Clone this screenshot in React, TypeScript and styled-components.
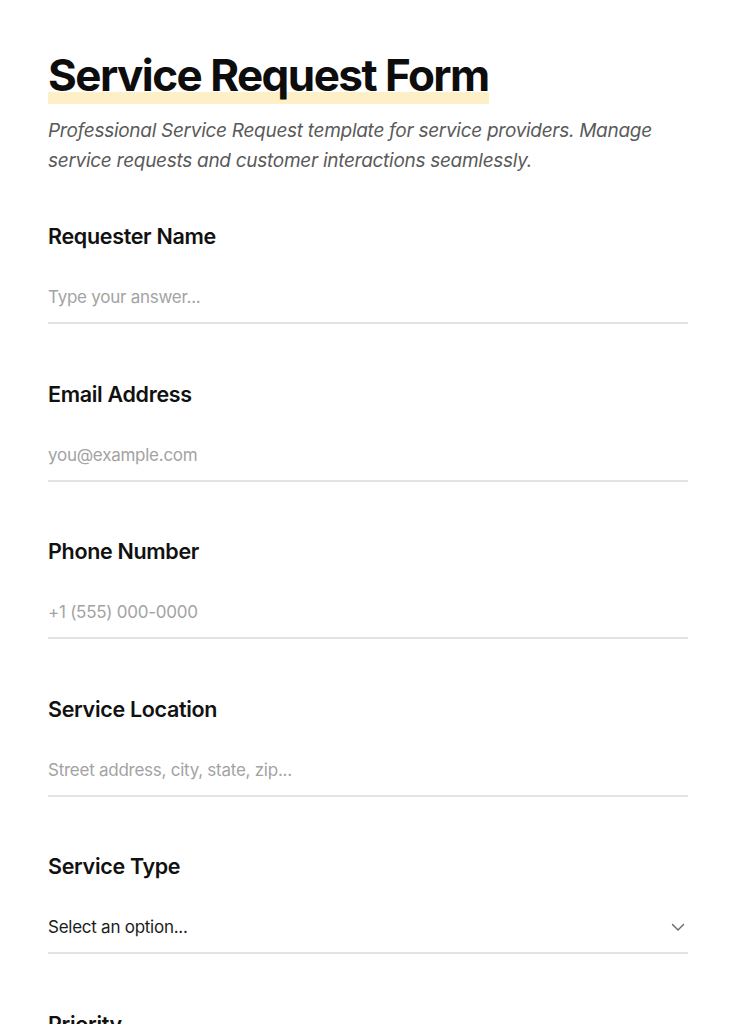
import { FC } from 'react';
import styled, { createGlobalStyle } from 'styled-components';

const GlobalStyle = createGlobalStyle`
    html, body {
        margin: 0;
        padding: 0;
        background: #ffffff;
    }
    body {
        font-family: Inter, "Noto Sans", "Liberation Sans", sans-serif;
        color: #111111;
        -webkit-font-smoothing: antialiased;
    }
    * {
        box-sizing: border-box;
    }
`;

const Page = styled.main`
    padding: 49px 48px 0 48px;
    width: 736px;
`;

const Title = styled.h1`
    margin: 0;
    font-size: 44px;
    line-height: 53px;
    font-weight: 700;
    letter-spacing: -0.035em;
    color: #0d0d0d;
`;

const Highlight = styled.span`
    background: linear-gradient(to bottom, transparent 78%, #fdf0c6 78%);
    padding-bottom: 2px;
`;

const Subtitle = styled.p`
    margin: 14px 0 46px 0;
    font-size: 19px;
    line-height: 30px;
    font-style: italic;
    color: #5a5a5a;
    letter-spacing: -0.015em;
`;

const Field = styled.div`
    margin-bottom: 55.5px;
`;

const Label = styled.label`
    display: block;
    font-size: 21.5px;
    line-height: 28px;
    font-weight: 600;
    letter-spacing: -0.015em;
    color: #111111;
    margin-bottom: 22px;
`;

const InputRow = styled.div`
    display: flex;
    align-items: center;
    height: 52px;
    border-bottom: 2px solid #e3e3e3;
`;

const TextInput = styled.input`
    flex: 1;
    height: 50px;
    border: none;
    outline: none;
    padding: 0;
    background: transparent;
    font-family: inherit;
    font-size: 17px;
    letter-spacing: -0.015em;
    color: #222222;

    &::placeholder {
        color: #a3a3a3;
    }
`;

const SelectValue = styled.span`
    flex: 1;
    font-size: 17px;
    letter-spacing: -0.015em;
    color: #1c1c1c;
`;

const Chevron = styled.svg`
    width: 16px;
    height: 16px;
    margin-right: 2px;
    color: #666666;
`;

interface IFieldProps {
    label: string;
    placeholder: string;
}

const InputField: FC<IFieldProps> = ({ label, placeholder }) => (
    <Field>
        <Label>{label}</Label>
        <InputRow>
            <TextInput placeholder={placeholder} />
        </InputRow>
    </Field>
);

const SelectField: FC<IFieldProps> = ({ label, placeholder }) => (
    <Field>
        <Label>{label}</Label>
        <InputRow>
            <SelectValue>{placeholder}</SelectValue>
            <Chevron viewBox="0 0 16 16" fill="none" stroke="currentColor" strokeWidth="1.4" strokeLinecap="round" strokeLinejoin="round">
                <path d="M2.5 5.5l5.5 5.5 5.5-5.5" />
            </Chevron>
        </InputRow>
    </Field>
);

const App: FC = () => (
    <>
        <GlobalStyle />
        <Page>
            <Title>
                <Highlight>Service Request Form</Highlight>
            </Title>
            <Subtitle>
                Professional Service Request template for service providers. Manage service requests and customer
                interactions seamlessly.
            </Subtitle>
            <InputField label="Requester Name" placeholder="Type your answer..." />
            <InputField label="Email Address" placeholder="you@example.com" />
            <InputField label="Phone Number" placeholder="+1 (555) 000-0000" />
            <InputField label="Service Location" placeholder="Street address, city, state, zip..." />
            <SelectField label="Service Type" placeholder="Select an option..." />
            <SelectField label="Priority" placeholder="Select an option..." />
        </Page>
    </>
);

export default App;
